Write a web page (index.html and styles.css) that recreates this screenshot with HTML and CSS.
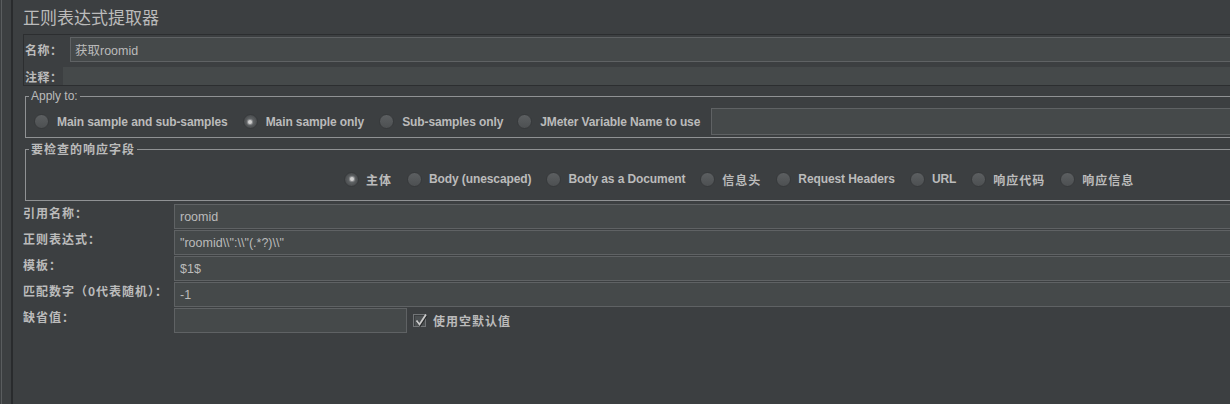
FILE: index.html
```html
<!DOCTYPE html>
<html lang="zh">
<head>
<meta charset="utf-8">
<title>正则表达式提取器</title>
<link rel="stylesheet" href="styles.css">
</head>
<body>
<div class="app">
  <div class="gutter"></div>
  <main class="panel">
    <h1 class="title">正则表达式提取器</h1>
    <div class="namebox">
      <div class="name-row">
        <span class="lbl lbl-name">名称：</span>
        <div class="field name-field">获取roomid</div>
      </div>
      <div class="comment-row">
        <span class="lbl lbl-comment">注释：</span>
        <div class="comment-field"></div>
      </div>
    </div>

    <fieldset class="group apply">
      <legend>Apply to:</legend>
      <div class="radios apply-radios">
        <label class="radio"><span class="rb"></span>Main sample and sub-samples</label>
        <label class="radio"><span class="rb on"></span>Main sample only</label>
        <label class="radio"><span class="rb"></span>Sub-samples only</label>
        <label class="radio last"><span class="rb"></span>JMeter Variable Name to use</label>
        <div class="field var-field"></div>
      </div>
    </fieldset>

    <fieldset class="group resp">
      <legend class="cjk">要检查的响应字段</legend>
      <div class="radios resp-radios">
        <label class="radio"><span class="rb on"></span><span class="cjk">主体</span></label>
        <label class="radio"><span class="rb"></span>Body (unescaped)</label>
        <label class="radio"><span class="rb"></span>Body as a Document</label>
        <label class="radio"><span class="rb"></span><span class="cjk">信息头</span></label>
        <label class="radio"><span class="rb"></span>Request Headers</label>
        <label class="radio"><span class="rb"></span>URL</label>
        <label class="radio"><span class="rb"></span><span class="cjk">响应代码</span></label>
        <label class="radio"><span class="rb"></span><span class="cjk">响应信息</span></label>
      </div>
    </fieldset>

    <div class="form">
      <div class="frow"><span class="flbl">引用名称：</span><div class="field">roomid</div></div>
      <div class="frow"><span class="flbl">正则表达式：</span><div class="field">"roomid\\":\\"(.*?)\\"</div></div>
      <div class="frow"><span class="flbl">模板：</span><div class="field">$1$</div></div>
      <div class="frow"><span class="flbl">匹配数字（0代表随机）：</span><div class="field">-1</div></div>
      <div class="frow">
        <span class="flbl">缺省值：</span>
        <div class="field short"></div>
        <label class="check">
          <span class="box"><svg width="14" height="14" viewBox="0 0 14 14"><path d="M2.5 7.5 L5.5 11.5 L12 1.5" fill="none" stroke="#262829" stroke-width="2.2" transform="translate(0.6 0.8)"/><path d="M2.5 7.5 L5.5 11.5 L12 1.5" fill="none" stroke="#c9c9c9" stroke-width="1.8"/></svg></span>
          <span class="cjk">使用空默认值</span>
        </label>
      </div>
    </div>
  </main>
</div>
</body>
</html>
```
FILE: styles.css
```css
html, body {
  margin: 0;
  padding: 0;
}
body {
  width: 1230px;
  height: 404px;
  overflow: hidden;
  background: #3c3f41;
  color: #bbbbbb;
  font-family: "Liberation Sans", "Noto Sans CJK SC", sans-serif;
  font-size: 12px;
}
.app {
  display: flex;
  height: 404px;
}
.gutter {
  flex: none;
  width: 12px;
  margin-left: 1px;
  box-sizing: border-box;
  border-left: 1px solid #5a5d5f;
  border-right: 2px solid #292b2d;
}
.panel {
  flex: none;
  width: 1260px;
  padding-left: 10px;
  box-sizing: border-box;
}
.title {
  margin: 0;
  height: 34px;
  line-height: 34px;
  font-size: 17px;
  font-weight: normal;
  color: #bbbbbb;
  font-family: "Noto Sans CJK SC", sans-serif;
}
.namebox {
  height: 52px;
  box-sizing: border-box;
  border: 1px solid #2c2e30;
  padding: 2px 0 0 1px;
}
.name-row {
  display: flex;
  align-items: center;
  height: 25px;
}
.lbl {
  flex: none;
  font-weight: bold;
  font-family: "Noto Sans CJK SC", sans-serif;
  font-size: 12px;
  letter-spacing: 0.5px;
  color: #bbbbbb;
}
.lbl-name { width: 45px; }
.lbl-comment { width: 38px; }
.field {
  flex: 1;
  min-width: 0;
  height: 25px;
  box-sizing: border-box;
  border: 1px solid #5f6264;
  background: #45494a;
  padding-left: 5px;
  display: flex;
  align-items: center;
  font-size: 12.5px;
  color: #bbbbbb;
  white-space: pre;
}
.name-field { padding-left: 4px; }
.comment-row {
  display: flex;
  align-items: center;
  height: 18px;
  margin-top: 5px;
}
.comment-field {
  flex: 1;
  height: 18px;
  background: #45494a;
}
.group {
  margin: 3px 0 0 2px;
  padding: 0;
  border: 1px solid #909294;
  min-width: 0;
}
.group legend {
  margin-left: 3px;
  padding: 0 2px;
  line-height: 14px;
  font-size: 12px;
  color: #bbbbbb;
}
.group legend.cjk {
  font-weight: bold;
  letter-spacing: 1px;
  font-family: "Noto Sans CJK SC", sans-serif;
}
.radios {
  display: flex;
  align-items: center;
}
.apply-radios {
  padding: 5px 0 2px 8px;
}
.resp {
  margin-top: 4px;
}
.resp-radios {
  padding: 15px 0 13px 318px;
  height: 16px;
}
.radio {
  display: flex;
  align-items: center;
  gap: 8px;
  margin-right: 15px;
  font-weight: bold;
  font-size: 12px;
  white-space: nowrap;
  color: #bbbbbb;
  letter-spacing: -0.1px;
}
.radio:nth-child(3) { margin-right: 14px; }
.resp-radios .radio {
  gap: 7px;
  margin-right: 15px;
}
.radio.last { margin-right: 11px; }
.rb {
  flex: none;
  width: 15px;
  height: 15px;
  border-radius: 50%;
  box-sizing: border-box;
  border: 1px solid #37393b;
  background: linear-gradient(#5c5f61, #4d5052);
  display: flex;
  align-items: center;
  justify-content: center;
}
.rb.on {
  background: radial-gradient(circle, #5f6264 0, #585b5d 45%, #46494b 75%, #4c4f51 100%);
}
.rb.on::after {
  content: "";
  width: 4px;
  height: 4px;
  border-radius: 50%;
  background: #cfcfcf;
  box-shadow: 0 0 1px 1px #8f9193;
}
.cjk {
  font-family: "Noto Sans CJK SC", sans-serif;
  letter-spacing: 1px;
}
.var-field {
  height: 27px;
}
.form {
  margin-top: 3px;
}
.frow {
  display: flex;
  height: 25px;
  margin-bottom: 1px;
}
.flbl {
  flex: none;
  width: 151px;
  padding-top: 1px;
  line-height: 16px;
  font-weight: bold;
  font-family: "Noto Sans CJK SC", sans-serif;
  font-size: 12px;
  letter-spacing: 1px;
  color: #bbbbbb;
  white-space: nowrap;
}
.field.short {
  flex: none;
  width: 233px;
}
.check {
  display: flex;
  align-items: center;
  gap: 7px;
  margin-left: 6px;
  font-weight: bold;
  font-size: 12px;
  color: #bbbbbb;
}
.box {
  flex: none;
  width: 13px;
  height: 13px;
  box-sizing: border-box;
  border: 1px solid #727577;
  background: #4b4f51;
  box-shadow: inset 1px 1px 0 #3a3d3f;
  position: relative;
}
.box svg {
  position: absolute;
  left: 0;
  top: -2px;
  overflow: visible;
}
```
